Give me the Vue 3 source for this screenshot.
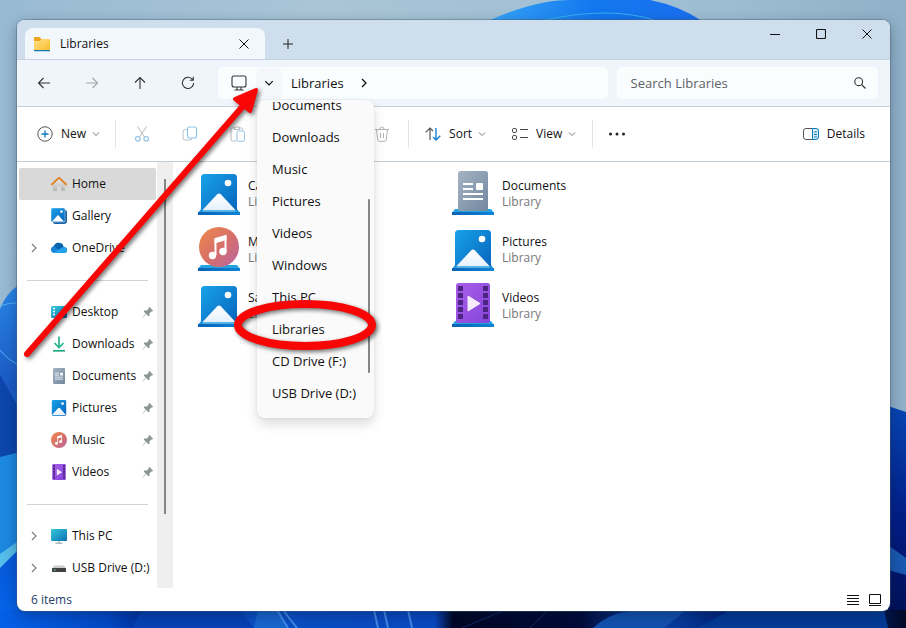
<script setup>
const quick = [
  { name: 'Desktop', icon: 'desktop' },
  { name: 'Downloads', icon: 'downloads' },
  { name: 'Documents', icon: 'document' },
  { name: 'Pictures', icon: 'picture' },
  { name: 'Music', icon: 'music' },
  { name: 'Videos', icon: 'video' },
]
const libraries = [
  { name: 'Camera Roll', icon: 'picture' },
  { name: 'Documents', icon: 'document' },
  { name: 'Music', icon: 'music' },
  { name: 'Pictures', icon: 'picture' },
  { name: 'Saved Pictures', icon: 'picture' },
  { name: 'Videos', icon: 'video' },
]
const places = ['Documents', 'Downloads', 'Music', 'Pictures', 'Videos', 'Windows', 'This PC', 'Libraries', 'CD Drive (F:)', 'USB Drive (D:)']
</script>

<template>
  <div class="desktop">
    <svg class="wallpaper" viewBox="0 0 906 628" preserveAspectRatio="none" aria-hidden="true">
      <defs>
        <linearGradient id="sky" x1="0" y1="0" x2="1" y2="0">
          <stop offset="0" stop-color="#98bad3" /><stop offset=".35" stop-color="#a9c5d6" />
          <stop offset=".8" stop-color="#9dbdd2" /><stop offset="1" stop-color="#8fb0c8" />
        </linearGradient>
        <linearGradient id="petalTop" x1="0" y1="0" x2="1" y2="0">
          <stop offset="0" stop-color="#36a5f8" /><stop offset=".5" stop-color="#1277ee" /><stop offset="1" stop-color="#1b6ff0" />
        </linearGradient>
        <linearGradient id="petalLeft" x1="0" y1="0" x2="0" y2="1">
          <stop offset="0" stop-color="#2a86e8" /><stop offset=".3" stop-color="#1a59c4" />
          <stop offset=".5" stop-color="#1f87e6" /><stop offset=".8" stop-color="#0759d8" /><stop offset="1" stop-color="#0566ee" />
        </linearGradient>
        <linearGradient id="petalRight" x1="0" y1="0" x2="0" y2="1">
          <stop offset="0" stop-color="#0846b4" /><stop offset=".5" stop-color="#021e86" /><stop offset="1" stop-color="#010f50" />
        </linearGradient>
        <linearGradient id="floor" x1="0" y1="0" x2="1" y2="0">
          <stop offset="0" stop-color="#0560e8" /><stop offset=".12" stop-color="#0248c4" /><stop offset=".17" stop-color="#012a92" />
          <stop offset=".28" stop-color="#0a50c4" /><stop offset=".48" stop-color="#0a48c0" /><stop offset=".5" stop-color="#010724" />
          <stop offset=".64" stop-color="#010a38" /><stop offset=".72" stop-color="#0b46aa" /><stop offset=".8" stop-color="#01247c" />
          <stop offset=".92" stop-color="#023c98" /><stop offset="1" stop-color="#010726" />
        </linearGradient>
      </defs>
      <path d="M0 0H906V628H0z" fill="url(#sky)" />
      <path d="M488 21Q535 0 570 0H650Q680 6 702 21z" fill="url(#petalTop)" />
      <path d="M545 20Q610 6 654 20" fill="none" stroke="#35b1f5" />
      <path d="M0 309Q6 293 20 284V628H0z" fill="url(#petalLeft)" />
      <path d="M0 306Q10 302 20 303M0 350Q10 362 20 365" fill="none" stroke="#52b4f2" />
      <path d="M0 375L20 410V452L0 460z" fill="#0c46ac" />
      <path d="M0 457L20 452V543L0 558z" fill="#1c88df" />
      <path d="M0 554L20 540V548L0 568z" fill="#55bde9" />
      <path d="M888 406L906 412V628H888z" fill="url(#petalRight)" />
      <path d="M888 545L906 558V575L888 570z" fill="#1a58b1" />
      <path d="M0 610H906V628H0z" fill="url(#floor)" />
      <path d="M132 628L142 610H240L254 628z" fill="#0642b4" />
      <path d="M254 628L258 610H279L288 628z" fill="#1766ce" />
      <path d="M277 610L288 628M283 610L297 628M374 610L378 628M384 610L388 628M408 610L412 628" fill="none" stroke="#4388e7" stroke-width="2" />
      <path d="M462 628L505 610M530 628L548 610" fill="none" stroke="#102b67" />
      <path d="M593 628Q610 612 637 610H686L664 628z" fill="#1251ae" />
      <path d="M697 628L730 610H884L888 628z" fill="#033b96" />
    </svg>

    <svg class="symbols" width="0" height="0" aria-hidden="true">
      <defs>
        <linearGradient id="gBlue" x1="0" y1="0" x2="1" y2="1"><stop offset="0" stop-color="#18a3e8" /><stop offset="1" stop-color="#0861bb" /></linearGradient>
        <linearGradient id="gSnow" x1="0" y1="0" x2="0" y2="1"><stop offset="0" stop-color="#fff" /><stop offset="1" stop-color="#e2effb" /></linearGradient>
        <linearGradient id="gGray" x1="0" y1="0" x2="1" y2="1"><stop offset="0" stop-color="#a5b4c4" /><stop offset="1" stop-color="#71879f" /></linearGradient>
        <linearGradient id="gMusic" x1="0" y1="0" x2="1" y2="1"><stop offset="0" stop-color="#f08a4b" /><stop offset=".55" stop-color="#d56e6c" /><stop offset="1" stop-color="#b768a6" /></linearGradient>
        <linearGradient id="gVideo" x1="0" y1="0" x2="1" y2="1"><stop offset="0" stop-color="#a95de8" /><stop offset="1" stop-color="#8546db" /></linearGradient>
        <linearGradient id="gShelf" x1="0" y1="0" x2="1" y2="0"><stop offset="0" stop-color="#0a62b4" /><stop offset="1" stop-color="#0f84d6" /></linearGradient>
        <linearGradient id="gFolder" x1="0" y1="0" x2="1" y2="1"><stop offset="0" stop-color="#ffe18a" /><stop offset="1" stop-color="#f9bc2d" /></linearGradient>
        <linearGradient id="gScreen" x1="0" y1="0" x2="1" y2="1"><stop offset="0" stop-color="#36c9d9" /><stop offset="1" stop-color="#0b71b4" /></linearGradient>
        <linearGradient id="gWall" x1="0" y1="0" x2="0" y2="1"><stop offset="0" stop-color="#ededed" /><stop offset="1" stop-color="#b5b5b5" /></linearGradient>
      </defs>
      <symbol id="picture" viewBox="0 0 40 40">
        <rect x="2" width="36" height="40" rx="3.500" fill="url(#gBlue)" />
        <path d="M3.500 36L18 20.500Q20 18.500 22 20.500L36.500 36V38H3.500z" fill="url(#gSnow)" /><circle cx="29" cy="9" r="3.300" fill="#fff" />
      </symbol>
      <symbol id="document" viewBox="0 0 40 40">
        <rect x="5" width="30" height="40" rx="2.500" fill="url(#gGray)" />
        <path d="M10 13h10M10 18h10M10 23h20M10 28h20" stroke="#fff" stroke-width="2" /><rect x="23" y="12" width="7" height="7" rx="1" fill="#fff" />
      </symbol>
      <symbol id="music" viewBox="0 0 40 40">
        <circle cx="20" cy="20" r="20" fill="url(#gMusic)" />
        <path d="M16.500 28V12L26.500 9V24" fill="none" stroke="#fff" stroke-width="2" /><path d="M15.500 11.500L27.500 8V13L15.500 16.500z" fill="#fff" />
        <circle cx="13.500" cy="28.500" r="3.700" fill="#fff" /><circle cx="24" cy="24.500" r="3.700" fill="#fff" />
      </symbol>
      <symbol id="video" viewBox="0 0 40 40">
        <rect x="3" width="34" height="40" rx="2.500" fill="url(#gVideo)" />
        <path d="M7.500 3V37M32.500 3V37" stroke="#4c2482" stroke-width="5" stroke-dasharray="5 2" />
        <path d="M15 13V28L27 20.500z" fill="#f5edfc" stroke="#f5edfc" stroke-linejoin="round" />
      </symbol>
      <symbol id="desktop" viewBox="0 0 16 16">
        <rect y="2" width="16" height="12" rx="1.500" fill="url(#gScreen)" /><path d="M2 4.500h2M2 7.500h2M2 10.500h2" stroke="#e9ffff" stroke-width="1.500" />
      </symbol>
      <symbol id="downloads" viewBox="0 0 16 16">
        <path d="M8 .500V11M3.500 7L8 11.500L12.500 7" fill="none" stroke="#2bb38f" stroke-width="1.700" /><path d="M2 14.800h12" stroke="#20a884" stroke-width="1.700" />
      </symbol>
      <symbol id="chev" viewBox="0 0 8 8"><path d="M1 2.500L4 5.500L7 2.500" fill="none" stroke="currentColor" /></symbol>
      <symbol id="expand" viewBox="0 0 8 10"><path d="M2 1L6 5L2 9" fill="none" stroke="currentColor" stroke-width="1.300" /></symbol>
      <symbol id="cross" viewBox="0 0 10 10"><path d="M.500 .500L9.500 9.500M9.500 .500L.500 9.500" stroke="currentColor" /></symbol>
    </svg>

    <main class="window">
      <header class="titlebar">
        <div class="tab">
          <svg class="i16" viewBox="0 0 16 16"><path d="M0 2Q0 1 1 1H5.500L7.500 3V7H0z" fill="#eda41a" /><path d="M0 5H6L8 3H15Q16 3 16 4V14H0z" fill="url(#gFolder)" /><path d="M0 14h16v1.300H0z" fill="#157bae" /></svg>
          <span>Libraries</span>
          <button class="bare tab-close" aria-label="Close tab"><svg class="i10"><use href="#cross" /></svg></button>
        </div>
        <button class="bare new-tab" aria-label="New tab"><svg class="i10" viewBox="0 0 10 10"><path d="M5 0v10M0 5h10" stroke="#222" /></svg></button>
        <div class="caption">
          <button class="bare" aria-label="Minimize"><svg class="i10" viewBox="0 0 10 10"><path d="M0 5.500h10" stroke="#111" /></svg></button>
          <button class="bare" aria-label="Maximize"><svg class="i10" viewBox="0 0 10 10"><rect x=".500" y=".500" width="9" height="9" rx="1" fill="none" stroke="#111" stroke-width="1.100" /></svg></button>
          <button class="bare" aria-label="Close"><svg class="i10"><use href="#cross" /></svg></button>
        </div>
      </header>

      <nav class="navbar">
        <div class="moves">
          <button class="bare" aria-label="Back"><svg class="i14" viewBox="0 0 14 14"><path d="M13 7H1.500M6.500 2L1.500 7L6.500 12" /></svg></button>
          <button class="bare faded" aria-label="Forward"><svg class="i14" viewBox="0 0 14 14"><path d="M1 7H12.500M7.500 2L12.500 7L7.500 12" /></svg></button>
          <button class="bare" aria-label="Up"><svg class="i14" viewBox="0 0 14 14"><path d="M7 13V1.500M2 6.500L7 1.500L12 6.500" /></svg></button>
          <button class="bare" aria-label="Refresh"><svg class="i14" viewBox="0 0 14 14"><path d="M12.600 7A5.600 5.600 0 1 1 10.800 2.800L12.300 4.200M12.300 .800V4.300H8.800" /></svg></button>
        </div>
        <div class="address">
          <svg class="pc" viewBox="0 0 16 16"><rect x="1" y="1" width="14" height="11" rx="2" /><path d="M6 12v3M10 12v3M3.500 15h9" /></svg>
          <button class="bare drop" aria-label="Previous locations"><svg class="i10"><use href="#chev" /></svg></button>
          <button class="bare crumb">Libraries</button>
          <svg class="crumb-arrow"><use href="#expand" /></svg>
          <div class="menu">
            <ul>
              <li v-for="p in places" :key="p"><a href="#">{{ p }}</a></li>
            </ul>
            <i class="menu-thumb"></i>
          </div>
        </div>
        <label class="search">
          <input type="text" placeholder="Search Libraries" aria-label="Search Libraries">
          <svg class="i12" viewBox="0 0 12 12"><circle cx="4.700" cy="4.700" r="3.900" /><path d="M7.500 7.500L11.500 11.500" /></svg>
        </label>
      </nav>

      <div class="toolbar">
        <button class="bare tool new">
          <svg class="i16" viewBox="0 0 16 16"><circle cx="8" cy="8" r="7.200" fill="none" stroke="#555" /><path d="M8 4.500v7M4.500 8h7" stroke="#0878ba" stroke-width="1.300" /></svg>
          New <svg class="i8"><use href="#chev" /></svg>
        </button>
        <i class="rule"></i>
        <div class="edits">
          <button class="bare" aria-label="Cut"><svg class="i16" viewBox="0 0 16 16"><path d="M3.500 .500L10.500 11M12.500 .500L5.500 11" fill="none" stroke="#b3b8bc" /><g fill="none" stroke="#8fc3e6" stroke-width="1.200"><circle cx="3.800" cy="12.800" r="2.300" /><circle cx="12.200" cy="12.800" r="2.300" /></g></svg></button>
          <button class="bare" aria-label="Copy"><svg class="i16" viewBox="0 0 16 16"><g fill="none"><path d="M5 3.500H3.500Q1 3.500 1 6V12Q1 14 3.500 14H8Q10 14 10 12" stroke="#b3c2cc" /><rect x="5.500" y="1" width="9" height="11" rx="2" stroke="#8fc3e6" stroke-width="1.200" /></g></svg></button>
          <button class="bare" aria-label="Paste"><svg class="i16" viewBox="0 0 16 16"><g fill="none"><path d="M6 15H2.500Q1 15 1 13.500V3.500Q1 2 2.500 2H4.500M9.500 2H11.500Q12.500 2 12.500 4M4.500 1h5v2.500h-5z" stroke="#b3b8bc" /><rect x="7" y="5" width="7.500" height="10.300" rx="1.300" stroke="#8fc3e6" /></g></svg></button>
          <button class="bare trash" aria-label="Delete"><svg class="i16" viewBox="0 0 16 16"><path d="M1 3.500h14M6 3.500Q6 1 8 1T10 3.500M2.500 3.500L3.800 14Q4 15.300 5.200 15.300H10.800Q12 15.300 12.200 14L13.500 3.500M6.500 7v5M9.500 7v5" fill="none" stroke="#b3b3b3" /></svg></button>
        </div>
        <i class="rule"></i>
        <button class="bare tool sort">
          <svg class="i16" viewBox="0 0 16 16"><path d="M5 14V2M.700 6.300L5 2L8 5" fill="none" stroke="#555" stroke-width="1.200" /><path d="M11 2V14M8 11L11 14L15.300 9.700" fill="none" stroke="#1683d8" stroke-width="1.400" /></svg>
          Sort <svg class="i8"><use href="#chev" /></svg>
        </button>
        <button class="bare tool view">
          <svg class="i16" viewBox="0 0 16 16"><g fill="none" stroke="#444"><rect x=".500" y="2.500" width="4" height="4" rx="1.300" /><rect x=".500" y="9.500" width="4" height="4" rx="1.300" /><path d="M8 3.500h8M8 11.500h8" /></g></svg>
          View <svg class="i8"><use href="#chev" /></svg>
        </button>
        <i class="rule"></i>
        <button class="bare more" aria-label="See more"><svg class="i16" viewBox="0 0 16 16"><g fill="#222"><circle cx="1.500" cy="8" r="1.500" /><circle cx="8" cy="8" r="1.500" /><circle cx="14.500" cy="8" r="1.500" /></g></svg></button>
        <button class="bare tool details">
          <svg class="i16" viewBox="0 0 16 16"><path d="M9.500 2.500H3Q.500 2.500 .500 5V11Q.500 13.500 3 13.500H9.500" fill="#fff" stroke="#555" /><path d="M9.500 2.500H13Q15.500 2.500 15.500 5V11Q15.500 13.500 13 13.500H9.500z" fill="#dcf0fb" stroke="#087bbd" /><path d="M11 6h3M11 8.500h3M11 11h3" stroke="#087bbd" /></svg>
          Details
        </button>
      </div>

      <div class="body">
        <aside class="side">
          <a href="#" class="row current"><i class="gap"></i><svg class="i16" viewBox="0 0 16 16"><path d="M2 7L8 2L14 7V15H10V10H6V15H2z" fill="url(#gWall)" /><path d="M.800 8.500L8 1.700L15.200 8.500" fill="none" stroke="#df852b" stroke-width="1.900" stroke-linecap="round" stroke-linejoin="round" /></svg>Home</a>
          <a href="#" class="row"><i class="gap"></i><svg class="i16" viewBox="0 0 16 16"><path d="M14 2Q16 2 16 4V13Q16 16 13 16H4Q2 16 2 14H14z" fill="#1663a6" /><rect width="14" height="14" rx="1.500" fill="url(#gBlue)" stroke="#fff" stroke-width=".400" /><path d="M1 13.500L7 7L13 13.500z" fill="#fff" /><circle cx="10.500" cy="3.500" r="1.300" fill="#fff" /></svg>Gallery</a>
          <a href="#" class="row"><svg class="gap"><use href="#expand" /></svg><svg class="i16" viewBox="0 0 16 16"><path d="M4 13Q0 13 0 9.500Q0 6.500 3 6Q5 2 9 3Q12 3.500 12.500 7Q16 7 16 10.200Q16 13 13 13z" fill="#1683d8" /><path d="M3 6Q5 2 9 3Q12 3.500 12.500 7L7 9.500z" fill="#0b63ae" /><path d="M2 12.500L12.500 7Q16 7 16 10.200Q16 13 13 13H4z" fill="#25a0ea" /></svg>OneDrive</a>
          <hr>
          <a v-for="q in quick" :key="q.name" href="#" class="row"><i class="gap"></i><svg class="i16"><use :href="'#' + q.icon" /></svg>{{ q.name }}<svg class="pin" viewBox="0 0 12 12"><path d="M7.200 .800L11.200 4.800L10 5.500L9.300 5.400L7.500 7.300V9.800L6.500 10.300L4.200 8L.800 11.500L.500 11.200L3.800 7.700L1.700 5.500L2.300 4.500H4.800L6.600 2.700L6.500 1.700z" fill="#8f9697" /></svg></a>
          <hr>
          <a href="#" class="row"><svg class="gap"><use href="#expand" /></svg><svg class="i16" viewBox="0 0 16 16"><rect y="1" width="16" height="12" rx="1" fill="url(#gScreen)" /><path d="M8 13v2M4.500 15.200h7" stroke="#8b9aa4" /></svg>This PC</a>
          <a href="#" class="row"><svg class="gap"><use href="#expand" /></svg><svg class="i16" viewBox="0 0 16 16"><path d="M3 5.500H13L15 8.500H1z" fill="#ccc" /><rect x="1" y="8" width="14" height="4" rx=".500" fill="#414141" /><path d="M3 10h1.500" stroke="#7ee39a" /></svg>USB Drive (D:)</a>
        </aside>
        <div class="track"><i></i></div>
        <section class="files">
          <a v-for="l in libraries" :key="l.name" href="#" class="lib">
            <svg class="lib-icon" viewBox="0 0 42 48">
              <path d="M3 39H39L42 43H0z" fill="#24a3df" />
              <use :href="'#' + l.icon" :x="1" :y="l.icon === 'picture' ? 4 : 1" width="40" height="40" />
              <path v-if="l.icon === 'picture'" d="M3 40H39L41 43H1z" fill="#1999dc" opacity=".7" />
              <path d="M0 42H42V45H0z" fill="url(#gShelf)" />
            </svg>
            <span>{{ l.name }}<small>Library</small></span>
          </a>
        </section>
      </div>

      <footer class="status">
        <span>6 items</span>
        <button class="bare" aria-label="Details view"><svg class="i12" viewBox="0 0 12 12"><path d="M0 1.500h12M0 4.500h12M0 7.500h12M0 10.500h12" stroke="#111" /></svg></button>
        <button class="bare" aria-label="Large icons view"><svg class="i12" viewBox="0 0 12 12"><path d="M.500 .500h11v9H.500zM0 11.500h12" fill="none" stroke="#111" /></svg></button>
      </footer>
    </main>

    <svg class="marks" width="400" height="380" viewBox="0 0 400 380" aria-hidden="true">
      <path d="M27 354L243 106" stroke="#f80505" stroke-width="6" stroke-linecap="round" />
      <path d="M256 90L235 99L250 111z" fill="#f80505" stroke="#f80505" stroke-width="4" stroke-linejoin="round" />
      <ellipse cx="305" cy="325" rx="67" ry="21" fill="none" stroke="#f80505" stroke-width="8" />
    </svg>
  </div>
</template>

<style>
body { margin: 0; }
</style>

<style scoped>
* { box-sizing: border-box; }
.desktop { position: relative; display: flex; min-height: 100vh; padding: 20px 16px 17px 17px; background: #9dbdd2; font-family: "Open Sans", "Noto Sans", sans-serif; font-size: 12px; line-height: 16px; color: #111; overflow: hidden; }
.wallpaper { position: absolute; inset: 0; width: 100%; height: 100%; }
.symbols { position: absolute; }
.marks { position: absolute; top: 0; left: 0; z-index: 5; filter: drop-shadow(2px 2px 2px rgba(0, 0, 0, .55)); pointer-events: none; }
.window { position: relative; flex: 1; min-width: 0; display: flex; flex-direction: column; background: #fff; border-radius: 8px; overflow: hidden; box-shadow: 0 0 0 1px rgba(70, 95, 115, .4), 0 4px 14px rgba(0, 20, 50, .35); }
.bare { display: flex; align-items: center; justify-content: center; padding: 0; border: 0; background: none; font: inherit; color: inherit; }
a { color: inherit; text-decoration: none; }
svg { flex: none; display: block; }
.i8 { width: 8px; height: 8px; }
.i10 { width: 10px; height: 10px; }
.i12 { width: 12px; height: 12px; }
.i14 { width: 14px; height: 14px; }
.i16 { width: 16px; height: 16px; }

.titlebar { display: flex; align-items: stretch; height: 39px; padding-left: 8px; background: #cfdeec; }
.tab { display: flex; align-items: center; gap: 10px; width: 240px; margin-top: 8px; padding: 0 16px 0 9px; border-radius: 8px 8px 0 0; background: #f2f7fc; font-weight: 500; }
.tab-close { margin-left: auto; }
.new-tab { width: 45px; padding-top: 8px; }
.caption { display: flex; height: 28px; margin-left: auto; }
.caption .bare { width: 46px; }

.navbar { display: flex; align-items: center; height: 48px; padding: 0 12px 0 3px; background: #f0f5fb; border-top: 1px solid #c3d3e1; border-bottom: 1px solid #c5d0db; font-size: 13px; }
.moves { display: flex; margin-right: 6px; }
.moves .bare { width: 48px; height: 32px; }
.moves path, .pc, .search svg { fill: none; stroke: #333; stroke-width: 1.100; }
.moves .faded path { stroke: #a2a7ad; }
.address { position: relative; display: flex; align-items: center; flex: 8; height: 32px; margin: 0 9px 0 0; padding-left: 13px; border-radius: 5px; background: #fafdfe; }
.pc { width: 16px; height: 16px; margin-right: 9px; }
.drop { width: 26px; height: 30px; margin-right: 9px; border-radius: 6px; background: #f4f6f9; }
.crumb-arrow { width: 8px; height: 10px; margin-left: 16px; }
.search { display: flex; align-items: center; flex: 5; height: 32px; padding: 0 12px 0 14px; border-radius: 5px; background: #fafdfe; }
.search input { flex: 1; min-width: 0; padding: 0; border: 0; outline: 0; background: none; font: inherit; }
.search input::placeholder { color: #5d6166; opacity: 1; }

.menu { position: absolute; top: 33px; left: 39px; z-index: 3; width: 117px; padding: 2px 0 9px; border-radius: 8px; background: #fafafa; box-shadow: 0 6px 12px rgba(0, 0, 0, .14), 0 0 3px rgba(0, 0, 0, .06); }
.menu ul { height: 307px; margin: 0; padding: 0; overflow: hidden; list-style: none; }
.menu li:first-child { margin-top: -13px; }
.menu a { display: block; padding-left: 15px; line-height: 32px; white-space: nowrap; }
.menu-thumb { position: absolute; top: 99px; right: 4px; width: 2px; height: 174px; border-radius: 1px; background: #858585; }

.toolbar { display: flex; align-items: center; height: 55px; padding: 0 25px 0 20px; border-bottom: 1px solid #c4ced6; }
.tool { height: 32px; gap: 8px; }
.tool .i8 { margin-left: -2px; color: #777; }
.rule { flex: none; width: 1px; height: 28px; background: #e2e4e6; }
.new { margin-right: 15px; }
.edits { display: flex; width: 292px; padding: 0 2px; }
.edits .bare { width: 48px; height: 32px; }
.edits .trash { margin-left: auto; }
.sort { margin: 0 26px 0 16px; }
.view { margin-right: 16px; }
.more { margin-left: 16px; }
.details { margin-left: auto; }

.body { flex: 1; display: flex; }
.side { width: 140px; padding: 6px 1px 0 2px; }
.row { display: flex; align-items: center; height: 32px; padding-left: 11px; white-space: nowrap; }
.current { background: #d9d9d9; border-radius: 2px; }
.row .i16 { margin-right: 5px; }
.gap { flex: none; width: 8px; height: 10px; margin-right: 13px; color: #858585; }
.pin { width: 12px; height: 12px; margin: 0 2px 0 auto; }
hr { height: 1px; margin: 16px 8px 15px 8px; border: 0; background: #d2d2d2; }
.track { display: flex; flex-direction: column; align-items: center; width: 16px; padding-top: 17px; background: #efefef; }
.track i { width: 2px; height: 82%; background: #858585; }
.files { flex: 1; display: grid; grid-template-columns: repeat(2, 254px); grid-auto-rows: 56px; padding: 4px 0 0 25px; }
.lib { display: flex; align-items: center; gap: 8px; }
.lib-icon { width: 42px; height: 48px; }
.lib small { display: block; font-size: 12px; color: #777; }

.status { display: flex; align-items: center; gap: 10px; height: 23px; padding: 0 9px 0 14px; color: #25406b; }
.status span { margin-right: auto; }
</style>
